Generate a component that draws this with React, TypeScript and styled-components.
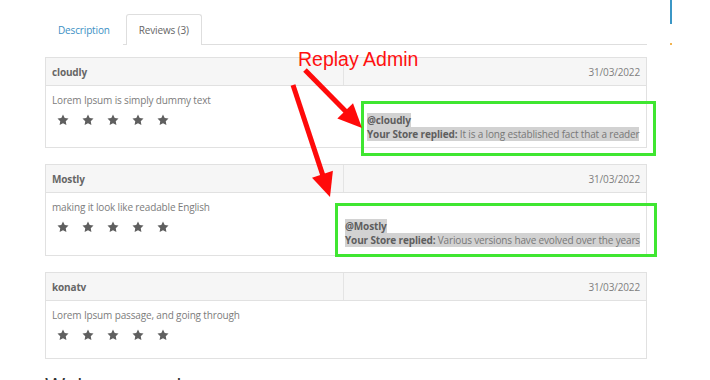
import styled, { createGlobalStyle } from 'styled-components';

const Global = createGlobalStyle`
  html, body { margin: 0; padding: 0; background: #fff; }
  body { font-family: 'Open Sans', 'Liberation Sans', sans-serif; overflow: hidden; }
`;

const Page = styled.div`
  position: relative;
  width: 710px;
  height: 380px;
  overflow: hidden;
  display: flex;
  align-items: flex-start;
`;

const Main = styled.div`
  margin-left: 45px;
  width: 602px;
  flex: none;
`;

const Side = styled.div`
  margin-left: 23px;
  width: 2px;
  display: flex;
  flex-direction: column;
  align-items: center;
`;

const SideBar = styled.div`
  width: 2px;
  height: 24px;
  background: #3b97c6;
`;

const SideDot = styled.div`
  width: 2px;
  height: 2px;
  margin-top: 19px;
  background: #f2b451;
`;

const Tabs = styled.div`
  display: flex;
  align-items: flex-end;
  padding-top: 14px;
  height: 30px;
  border-bottom: 1px solid #dedede;
`;

const Tab = styled.div<{ $active?: boolean }>`
  height: 30px;
  display: flex;
  align-items: center;
  padding: 0 12px;
  margin-left: ${p => (p.$active ? '3px' : '0')};
  margin-bottom: -1px;
  font-size: 10px;
  letter-spacing: -0.15px;
  color: ${p => (p.$active ? '#666' : '#3d8fc4')};
  background: #fff;
  border: 1px solid ${p => (p.$active ? '#dedede' : 'transparent')};
  border-bottom: none;
  border-radius: 3px 3px 0 0;
`;

const Card = styled.div`
  margin-top: 12px;
  border: 1px solid #e1e1e1;
  & + & { margin-top: 16px; }
`;

const CardHead = styled.div`
  display: grid;
  grid-template-columns: 298px 1fr;
  height: 27px;
  background: #f6f6f6;
  border-bottom: 1px solid #e1e1e1;
  font-size: 10px;
  letter-spacing: -0.15px;
`;

const Author = styled.div`
  display: flex;
  align-items: center;
  padding-left: 6px;
  border-right: 1px solid #e4e4e4;
  font-weight: 700;
  color: #666;
`;

const DateCell = styled.div`
  display: flex;
  align-items: center;
  justify-content: flex-end;
  padding-right: 6px;
  color: #7e7e7e;
`;

const CardBody = styled.div<{ $h: number }>`
  display: flex;
  align-items: flex-start;
  height: ${p => p.$h}px;
`;

const Comment = styled.div`
  width: 298px;
  flex: none;
  box-sizing: border-box;
  padding: 7px 0 0 6px;
`;

const CommentText = styled.div`
  font-size: 10px;
  letter-spacing: -0.15px;
  line-height: 15px;
  color: #7c7c7c;
`;

const Stars = styled.div`
  display: flex;
  gap: 13px;
  margin: 6px 0 0 5px;
`;

const ReplyBox = styled.div<{ $ml: number; $mt: number; $w: number; $h: number; $pt: number; $pl: number }>`
  flex: none;
  box-sizing: border-box;
  width: ${p => p.$w}px;
  height: ${p => p.$h}px;
  margin-left: ${p => p.$ml}px;
  margin-top: ${p => p.$mt}px;
  padding: ${p => p.$pt}px 0 0 ${p => p.$pl}px;
  border: 3px solid #3fe631;
  font-size: 10px;
  letter-spacing: -0.15px;
  line-height: 13.5px;
  color: #777;
`;

const Mark = styled.span`
  background: #d2d2d2;
`;

const Strong = styled.b`
  color: #5e5e5e;
`;

const Heading = styled.h2`
  margin: 11px 0 0;
  font-size: 22px;
  font-weight: 400;
  color: #333;
  letter-spacing: -0.3px;
  white-space: nowrap;
`;

const Overlay = styled.div`
  position: absolute;
  inset: 0;
  pointer-events: none;
`;

const Label = styled.div`
  position: absolute;
  left: 298px;
  top: 48px;
  font-family: 'Liberation Sans', Arial, sans-serif;
  font-size: 19.5px;
  color: #ff1010;
`;

const Arrows = styled.svg`
  position: absolute;
  left: 0;
  top: 0;
`;

const Star = () => (
  <svg width="12" height="12" viewBox="0 0 24 24">
    <polygon
      fill="#5f5f5f"
      points="12 1.2 15.4 8.1 23 9.2 17.5 14.5 18.8 22 12 18.4 5.2 22 6.5 14.5 1 9.2 8.6 8.1"
    />
  </svg>
);

type Reply = { ml: number; mt: number; w: number; h: number; pt: number; pl: number; text: string };

type Review = {
  author: string;
  date: string;
  text: string;
  h: number;
  reply?: Reply;
};

const reviews: Review[] = [
  {
    author: 'cloudly',
    date: '31/03/2022',
    text: 'Lorem Ipsum is simply dummy text',
    h: 61,
    reply: { ml: 17, mt: 15, w: 295, h: 55, pt: 10, pl: 3, text: 'It is a long established fact that a reader' },
  },
  {
    author: 'Mostly',
    date: '31/03/2022',
    text: 'making it look like readable English',
    h: 62,
    reply: { ml: -9, mt: 10, w: 322, h: 54, pt: 14, pl: 7, text: 'Various versions have evolved over the years' },
  },
  {
    author: 'konatv',
    date: '31/03/2022',
    text: 'Lorem Ipsum passage, and going through',
    h: 57,
  },
];

const Arrow = ({ x1, y1, x2, y2 }: { x1: number; y1: number; x2: number; y2: number }) => {
  const dx = x2 - x1;
  const dy = y2 - y1;
  const len = Math.hypot(dx, dy);
  const ux = dx / len;
  const uy = dy / len;
  const hl = 24;
  const hw = 11;
  const bx = x2 - ux * hl;
  const by = y2 - uy * hl;
  const pts = `${x2},${y2} ${bx - uy * hw},${by + ux * hw} ${bx + uy * hw},${by - ux * hw}`;
  return (
    <>
      <line x1={x1} y1={y1} x2={bx + ux * 2} y2={by + uy * 2} stroke="#ff0a0a" strokeWidth="5" />
      <polygon points={pts} fill="#ff0a0a" />
    </>
  );
};

export default function App() {
  return (
    <>
      <Global />
      <Page>
        <Main>
          <Tabs>
            <Tab>Description</Tab>
            <Tab $active>Reviews (3)</Tab>
          </Tabs>
          {reviews.map(r => (
            <Card key={r.author}>
              <CardHead>
                <Author>{r.author}</Author>
                <DateCell>{r.date}</DateCell>
              </CardHead>
              <CardBody $h={r.h}>
                <Comment>
                  <CommentText>{r.text}</CommentText>
                  <Stars>
                    {[0, 1, 2, 3, 4].map(i => (
                      <Star key={i} />
                    ))}
                  </Stars>
                </Comment>
                {r.reply && (
                  <ReplyBox
                    $ml={r.reply.ml}
                    $mt={r.reply.mt}
                    $w={r.reply.w}
                    $h={r.reply.h}
                    $pt={r.reply.pt}
                    $pl={r.reply.pl}
                  >
                    <div>
                      <Mark>
                        <Strong>@{r.author}</Strong>
                      </Mark>
                    </div>
                    <div>
                      <Mark>
                        <Strong>Your Store replied:</Strong> {r.reply.text}
                      </Mark>
                    </div>
                  </ReplyBox>
                )}
              </CardBody>
            </Card>
          ))}
          <Heading>Welcome and</Heading>
        </Main>
        <Side>
          <SideBar />
          <SideDot />
        </Side>
        <Overlay>
          <Label>Replay Admin</Label>
          <Arrows width="710" height="380">
            <Arrow x1={305} y1={70} x2={362} y2={128} />
            <Arrow x1={293} y1={85} x2={330} y2={197} />
          </Arrows>
        </Overlay>
      </Page>
    </>
  );
}
